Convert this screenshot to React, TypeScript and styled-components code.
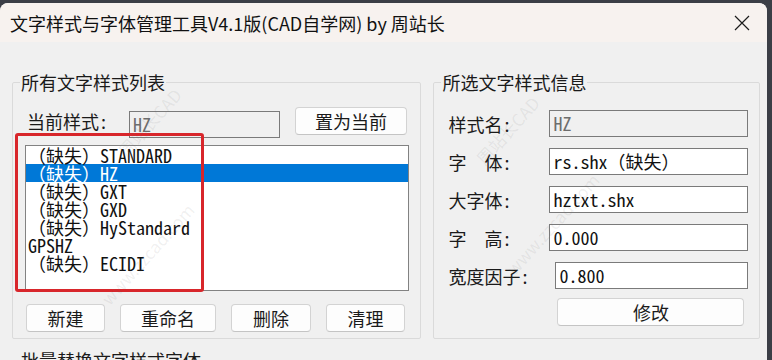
import React from "react";
import styled, { createGlobalStyle } from "styled-components";

const SONG = `"Noto Sans Mono CJK SC", "Noto Sans CJK SC", "Liberation Mono", monospace`;
const UI = `"Noto Sans CJK SC", "Noto Sans", sans-serif`;

const Global = createGlobalStyle`
  html, body { margin: 0; padding: 0; background: #3b3e46; overflow: hidden; }
  body { width: 772px; height: 360px; }
  * { box-sizing: border-box; }
`;

const Screen = styled.div`
  width: 772px;
  height: 360px;
  padding: 3px 5px 0 0;
  background: #3b3e46;
  overflow: hidden;
`;

const Window = styled.div`
  position: relative;
  width: 767px;
  height: 357px;
  background: #f0f0f0;
  border-radius: 8px 8px 0 0;
  overflow: hidden;
`;

const TitleBar = styled.div`
  height: 39px;
  display: flex;
  align-items: center;
  justify-content: space-between;
  padding: 0 17px 0 10px;
  background: #f7f2ef;
  font-family: ${UI};
  font-size: 18px;
  color: #111;
`;

const Body = styled.div`
  padding: 30px 7px 0 12px;
  font-family: ${SONG};
  font-size: 18px;
  color: #1a1a1a;
`;

const TopRow = styled.div`
  display: flex;
  gap: 12px;
  align-items: stretch;
`;

const Group = styled.fieldset<{ $w: number; $pad: string }>`
  margin: 0;
  min-width: 0;
  width: ${(p) => p.$w}px;
  padding: ${(p) => p.$pad};
  border: 1px solid #dadada;
  border-radius: 2px;
`;

const Legend = styled.legend<{ $x: number }>`
  font-family: ${SONG};
  font-size: 18px;
  line-height: 20px;
  padding: 0 1px;
  margin-left: ${(p) => p.$x}px;
  color: #1a1a1a;
`;

const CurrentRow = styled.div`
  display: flex;
  align-items: flex-start;
  height: 28px;
`;

const Label = styled.span<{ $w: number }>`
  flex: none;
  width: ${(p) => p.$w}px;
  line-height: 28px;
  white-space: pre;
`;

const TextBox = styled.div<{ $disabled?: boolean; $w?: number; $top?: number }>`
  flex: ${(p) => (p.$w ? "none" : "1")};
  width: ${(p) => (p.$w ? `${p.$w}px` : "auto")};
  height: 27px;
  margin-top: ${(p) => p.$top ?? 0}px;
  padding: 0 3px;
  border: 1px solid #7a7a7a;
  background: ${(p) => (p.$disabled ? "#f0f0f0" : "#ffffff")};
  color: ${(p) => (p.$disabled ? "#6d6d6d" : "#111")};
  line-height: 25px;
  white-space: pre;
`;

const Button = styled.button<{ $w: number }>`
  flex: none;
  width: ${(p) => p.$w}px;
  height: 28px;
  padding: 0;
  border: 1px solid #d3d3d3;
  border-bottom-color: #c4c4c4;
  border-radius: 4px;
  background: #fdfdfd;
  font-family: ${SONG};
  font-size: 18px;
  color: #1a1a1a;
  line-height: 26px;
`;

const ListBox = styled.div`
  margin-top: 10px;
  height: 146px;
  border: 1px solid #828282;
  background: #fff;
`;

const Item = styled.div<{ $sel?: boolean }>`
  height: 18px;
  line-height: 18px;
  padding-left: 2px;
  white-space: pre;
  background: ${(p) => (p.$sel ? "#0078d7" : "transparent")};
  color: ${(p) => (p.$sel ? "#fff" : "#111")};
`;

const ButtonRow = styled.div`
  display: flex;
  gap: 15px;
  margin-top: 13px;
  padding-left: 1px;
`;

const FieldStack = styled.div`
  display: flex;
  flex-direction: column;
  gap: 11px;
  padding-top: 3px;
`;

const FieldRow = styled.div`
  display: flex;
  align-items: center;
  height: 27px;
`;

const ApplyRow = styled.div`
  display: flex;
  padding-left: 109px;
  margin-top: -2px;
`;

const BottomGroup = styled(Group)`
  margin-top: 11px;
  height: 40px;
`;

const Annotation = styled.div`
  position: absolute;
  left: 15px;
  top: 130px;
  width: 189px;
  height: 159px;
  border: 3px solid #d8262b;
  border-radius: 3px;
  pointer-events: none;
`;

const Watermark = styled.span<{ $x: number; $y: number }>`
  position: absolute;
  left: ${(p) => p.$x}px;
  top: ${(p) => p.$y}px;
  transform: rotate(-48deg);
  transform-origin: left top;
  font-family: ${UI};
  font-size: 17px;
  color: rgba(110, 110, 110, 0.1);
  white-space: nowrap;
  pointer-events: none;
`;

const CloseIcon = () => (
  <svg width="16" height="16" viewBox="0 0 16 16">
    <path d="M1 1 L15 15 M15 1 L1 15" stroke="#1c1c1c" strokeWidth="1.2" fill="none" />
  </svg>
);

const styles = [
  { name: "（缺失）STANDARD" },
  { name: "（缺失）HZ", sel: true },
  { name: "（缺失）GXT" },
  { name: "（缺失）GXD" },
  { name: "（缺失）HyStandard" },
  { name: "GPSHZ" },
  { name: "（缺失）ECIDI" },
];

const fields = [
  { label: "样式名:", value: "HZ", disabled: true, lw: 101 },
  { label: "字　体:", value: "rs.shx（缺失）", lw: 101 },
  { label: "大字体:", value: "hztxt.shx", lw: 101 },
  { label: "字　高:", value: "0.000", lw: 101 },
  { label: "宽度因子:", value: "0.800", lw: 107 },
];

export default function App() {
  return (
    <>
      <Global />
      <Screen>
        <Window>
          <TitleBar>
            <span>文字样式与字体管理工具V4.1版(CAD自学网) by 周站长</span>
            <CloseIcon />
          </TitleBar>
          <Body>
            <TopRow>
              <Group $w={410} $pad="15px 11px 6px 12px">
                <Legend $x={-5}>所有文字样式列表</Legend>
                <CurrentRow>
                  <Label $w={102} style={{ marginLeft: 2 }}>当前样式:</Label>
                  <TextBox $disabled $w={151} $top={4}>HZ</TextBox>
                  <Button $w={112} style={{ marginLeft: 15 }}>置为当前</Button>
                </CurrentRow>
                <ListBox>
                  {styles.map((s) => (
                    <Item key={s.name} $sel={s.sel}>{s.name}</Item>
                  ))}
                </ListBox>
                <ButtonRow>
                  <Button $w={79}>新建</Button>
                  <Button $w={96}>重命名</Button>
                  <Button $w={80}>删除</Button>
                  <Button $w={79}>清理</Button>
                </ButtonRow>
              </Group>
              <Group $w={327} $pad="15px 11px 10px 14px">
                <Legend $x={-7}>所选文字样式信息</Legend>
                <FieldStack>
                  {fields.map((f) => (
                    <FieldRow key={f.label}>
                      <Label $w={f.lw}>{f.label}</Label>
                      <TextBox $disabled={f.disabled}>{f.value}</TextBox>
                    </FieldRow>
                  ))}
                  <ApplyRow>
                    <Button $w={187}>修改</Button>
                  </ApplyRow>
                </FieldStack>
              </Group>
            </TopRow>
            <BottomGroup $w={748} $pad="0 11px 0 12px">
              <Legend $x={-5}>批量替换文字样式字体</Legend>
            </BottomGroup>
          </Body>
          <Annotation />
          <Watermark $x={112} $y={142}>周站长CAD</Watermark>
          <Watermark $x={95} $y={290}>www.zzcad.com</Watermark>
          <Watermark $x={470} $y={150}>周站长CAD</Watermark>
          <Watermark $x={500} $y={260}>www.zzcad.com</Watermark>
        </Window>
      </Screen>
    </>
  );
}
